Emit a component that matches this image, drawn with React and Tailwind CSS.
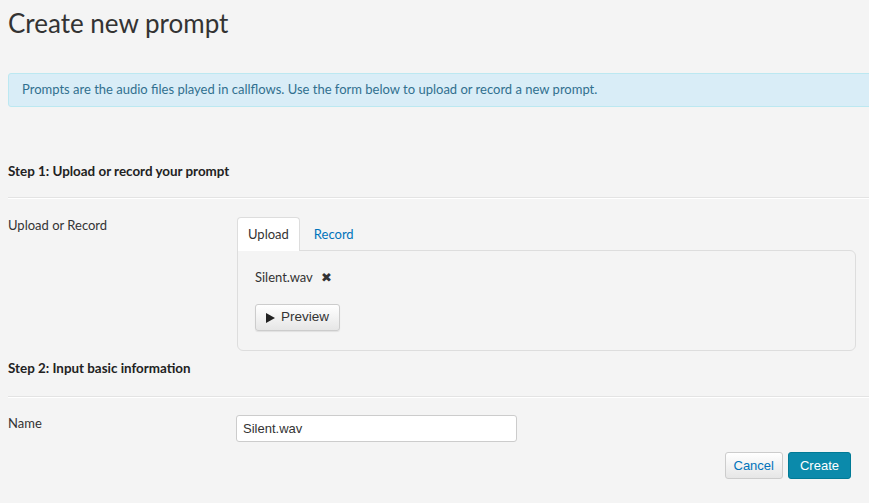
import { useState } from "react";

export default function App() {
  const [tab, setTab] = useState("upload");
  const [name, setName] = useState("Silent.wav");

  return (
    <div className="min-h-screen bg-[#f4f4f4] overflow-hidden pl-2 text-[#333] font-['Lato',sans-serif]">
      {/* Page title */}
      <h1 className="pt-[8px] text-[26px] leading-[30px] text-[#333]">Create new prompt</h1>

      {/* Info alert */}
      <div className="mt-[35px] -mr-4 h-[34px] flex items-center pl-[13px] bg-[#d9edf7] border border-[#bce8f1] rounded-[3px] text-[13px] text-[#31708f]">
        Prompts are the audio files played in callflows. Use the form below to upload or record a new prompt.
      </div>

      {/* Step 1 */}
      <h2 className="mt-[55px] text-[13.4px] font-bold leading-[18px] text-[#222]">Step 1: Upload or record your prompt</h2>
      <div className="mt-[17px] border-t border-[#e3e3e3] border-b border-b-white" />

      <div className="flex mt-[18px]">
        <label className="w-[229px] shrink-0 text-[13px] leading-[16px]">Upload or Record</label>
        <div className="w-[619px]">
          <div className="flex h-[34px] text-[13px]">
            <button
              onClick={() => setTab("upload")}
              className={`px-[10px] rounded-t-[4px] border border-b-0 ${tab === "upload" ? "bg-white border-[#ddd] text-[#333]" : "border-transparent text-[#0073bb]"}`}
            >
              Upload
            </button>
            <button
              onClick={() => setTab("record")}
              className={`px-[13px] rounded-t-[4px] border border-b-0 ${tab === "record" ? "bg-white border-[#ddd] text-[#333]" : "border-transparent text-[#0073bb]"}`}
            >
              Record
            </button>
          </div>
          <div className="-mt-px h-[101px] border border-[#ddd] rounded-b-[6px] rounded-tr-[6px] px-[17px] pt-[18px]">
            <div className="flex items-center text-[13px] leading-[16px]">
              <span>Silent.wav</span>
              <span className="ml-[8px] text-[13px] text-[#333]">✖</span>
            </div>
            <button className="mt-[19px] h-[27px] px-[10px] flex items-center gap-[6px] border border-[#ccc] rounded-[3px] bg-gradient-to-b from-white to-[#e6e6e6] shadow-[0_1px_1px_rgba(0,0,0,0.08)] text-[13.5px] text-[#333] font-['Liberation_Sans',sans-serif]">
              <svg width="9" height="10" viewBox="0 0 9 10"><path d="M0 0 L9 5 L0 10 Z" fill="#222" /></svg>
              Preview
            </button>
          </div>
        </div>
      </div>

      {/* Step 2 */}
      <h2 className="mt-[8px] text-[13.4px] font-bold leading-[18px] text-[#222]">Step 2: Input basic information</h2>
      <div className="mt-[19px] border-t border-[#e3e3e3] border-b border-b-white" />

      <div className="flex mt-[17px]">
        <label className="w-[228px] shrink-0 text-[13px] leading-[16px]">Name</label>
        <input
          value={name}
          onChange={(e) => setName(e.target.value)}
          className="w-[281px] h-[27px] px-[6px] bg-white border border-[#ccc] rounded-[3px] text-[13px] text-[#333] font-['Liberation_Sans',sans-serif] outline-none"
        />
      </div>

      <div className="flex justify-end gap-[5px] mt-[10px] pr-[18px]">
        <button className="h-[27px] px-[8px] border border-[#ccc] rounded-[3px] bg-gradient-to-b from-white to-[#e6e6e6] text-[13px] text-[#0073bb] font-['Liberation_Sans',sans-serif]">
          Cancel
        </button>
        <button className="h-[27px] px-[11px] border border-[#007a96] rounded-[3px] bg-[#0b8aab] text-[13px] text-white font-['Liberation_Sans',sans-serif]">
          Create
        </button>
      </div>
    </div>
  );
}
